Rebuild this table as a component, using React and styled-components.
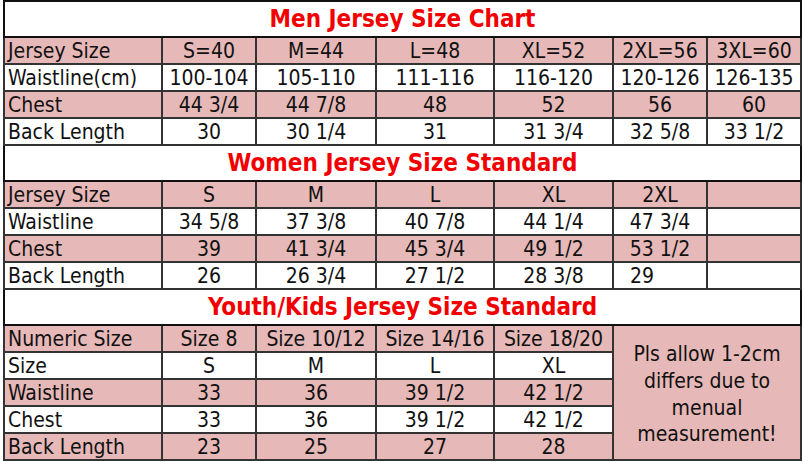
import React from "react";
import styled, { createGlobalStyle } from "styled-components";

const Global = createGlobalStyle`
  html, body { margin: 0; padding: 0; background: #ffffff; }
  body { width: 804px; height: 462px; overflow: hidden; }
`;

const PINK = "#e6b8b7";
const LINE = "#333333";

const Page = styled.div`
  padding: 0 0 0 3px;
  font-family: "DejaVu Sans Condensed", "DejaVu Sans", sans-serif;
  font-stretch: condensed;
  color: #111111;
`;

const Table = styled.table`
  border-collapse: collapse;
  table-layout: fixed;
  width: 799px;
  border: 2px solid #111111;
`;

const Col = styled.col`
  width: ${(p) => p.$w}px;
`;

const Row = styled.tr`
  height: ${(p) => (p.$title ? 36 : 27)}px;
  background: ${(p) => (p.$pink ? PINK : "#ffffff")};
`;

const Cell = styled.td`
  border: 2px solid ${LINE};
  padding: 0 0 1px ${(p) => (p.$left ? "3px" : p.$indent ? `${p.$indent}px` : "0")};
  font-size: 21px;
  line-height: 21px;
  vertical-align: bottom;
  text-align: ${(p) => (p.$left || p.$indent ? "left" : "center")};
  white-space: nowrap;
  overflow: hidden;
`;

const Title = styled.td`
  border: 2px solid #111111;
  padding: 0 0 5px 0;
  font-size: 24px;
  line-height: 24px;
  font-weight: bold;
  color: #f20000;
  text-align: center;
  vertical-align: bottom;
  background: #ffffff;
`;

const Note = styled.td`
  border: 2px solid ${LINE};
  background: ${PINK};
  font-size: 21px;
  line-height: 26.7px;
  text-align: center;
  vertical-align: middle;
  padding: 4px 0 0 0;
`;

const widths = [158, 94, 120, 118, 119, 94, 94];

const men = [
  { label: "Jersey Size", pink: true, v: ["S=40", "M=44", "L=48", "XL=52", "2XL=56", "3XL=60"] },
  { label: "Waistline(cm)", v: ["100-104", "105-110", "111-116", "116-120", "120-126", "126-135"] },
  { label: "Chest", pink: true, v: ["44 3/4", "44 7/8", "48", "52", "56", "60"] },
  { label: "Back Length", v: ["30", "30 1/4", "31", "31 3/4", "32 5/8", "33 1/2"] },
];

const women = [
  { label: "Jersey Size", pink: true, v: ["S", "M", "L", "XL", "2XL", ""] },
  { label: "Waistline", v: ["34 5/8", "37 3/8", "40 7/8", "44 1/4", "47 3/4", ""] },
  { label: "Chest", pink: true, v: ["39", "41 3/4", "45 3/4", "49 1/2", "53 1/2", ""] },
  { label: "Back Length", v: ["26", "26 3/4", "27 1/2", "28 3/8", { t: "29", indent: 16 }, ""] },
];

const youth = [
  { label: "Numeric Size", pink: true, v: ["Size 8", "Size 10/12", "Size 14/16", "Size 18/20"] },
  { label: "Size", v: ["S", "M", "L", "XL"] },
  { label: "Waistline", pink: true, v: ["33", "36", "39 1/2", "42 1/2"] },
  { label: "Chest", v: ["33", "36", "39 1/2", "42 1/2"] },
  { label: "Back Length", pink: true, v: ["23", "25", "27", "28"] },
];

function DataRow({ row, children }) {
  return (
    <Row $pink={row.pink}>
      <Cell $left>{row.label}</Cell>
      {row.v.map((val, i) =>
        typeof val === "object" ? (
          <Cell key={i} $indent={val.indent}>{val.t}</Cell>
        ) : (
          <Cell key={i}>{val}</Cell>
        )
      )}
      {children}
    </Row>
  );
}

function Section({ title, rows, note }) {
  return (
    <>
      <Row $title>
        <Title colSpan={7}>{title}</Title>
      </Row>
      {rows.map((r, i) => (
        <DataRow key={i} row={r}>
          {note && i === 0 ? (
            <Note rowSpan={rows.length} colSpan={2}>
              Pls allow 1-2cm
              <br />
              differs due to
              <br />
              menual
              <br />
              measurement!
            </Note>
          ) : null}
        </DataRow>
      ))}
    </>
  );
}

export default function App() {
  return (
    <Page>
      <Global />
      <Table>
        <colgroup>
          {widths.map((w, i) => (
            <Col key={i} $w={w} />
          ))}
        </colgroup>
        <tbody>
          <Section title="Men Jersey Size Chart" rows={men} />
          <Section title="Women Jersey Size Standard" rows={women} />
          <Section title="Youth/Kids Jersey Size Standard" rows={youth} note />
        </tbody>
      </Table>
    </Page>
  );
}
